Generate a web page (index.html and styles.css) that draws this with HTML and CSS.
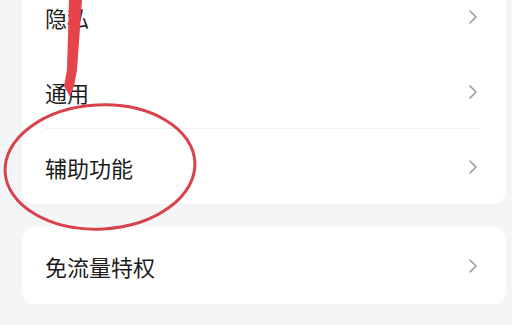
FILE: index.html
```html
<!DOCTYPE html>
<html lang="zh-CN">
<head>
<meta charset="utf-8">
<link rel="stylesheet" href="styles.css">
</head>
<body>
<div class="page">
  <div class="card card-top">
    <div class="row"><span class="label">隐私</span><svg class="chev" viewBox="0 0 10 16"><path d="M2 2 L8 8 L2 14"/></svg></div>
    <div class="row row-div"><span class="label">通用</span><svg class="chev" viewBox="0 0 10 16"><path d="M2 2 L8 8 L2 14"/></svg></div>
    <div class="row"><span class="label">辅助功能</span><svg class="chev" viewBox="0 0 10 16"><path d="M2 2 L8 8 L2 14"/></svg></div>
  </div>
  <div class="card card-second">
    <div class="row row-single"><span class="label">免流量特权</span><svg class="chev" viewBox="0 0 10 16"><path d="M2 2 L8 8 L2 14"/></svg></div>
  </div>
  <svg class="annot" viewBox="0 0 512 325" width="512" height="325">
    <polygon class="arrow" points="69,0 82,0 77,70 74,86 70,97 64,86 67,70"/>
    <ellipse class="ring" cx="100" cy="167" rx="95" ry="62" transform="rotate(-3 100 167)"/>
  </svg>
</div>
</body>
</html>
```
FILE: styles.css
```css
html, body {
  margin: 0;
  padding: 0;
  background: #f4f5f7;
}
body {
  width: 512px;
  height: 325px;
  overflow: hidden;
  font-family: "Noto Sans CJK SC", "Noto Sans", sans-serif;
}
.page {
  position: relative;
  width: 512px;
  height: 325px;
  padding: 0 6px 0 22px;
  box-sizing: border-box;
  display: flex;
  flex-direction: column;
  gap: 23px;
}
.card {
  background: #ffffff;
  border-radius: 12px;
}
.card-top {
  margin-top: -21px;
  border-radius: 0 0 12px 12px;
}
.row {
  height: 75px;
  display: flex;
  align-items: center;
  justify-content: space-between;
  padding: 0 28px 0 23px;
  position: relative;
}
.row-div::after {
  content: "";
  position: absolute;
  left: 23px;
  right: 26px;
  bottom: 0;
  height: 1px;
  background: #f0f1f3;
}
.row-single {
  height: 77px;
}
.label {
  font-size: 22px;
  color: #1c1c1c;
  line-height: 1;
}
.chev {
  width: 10px;
  height: 16px;
  fill: none;
  stroke: #9c9c9c;
  stroke-width: 1.6;
  stroke-linecap: round;
  stroke-linejoin: round;
}
.annot {
  position: absolute;
  left: 0;
  top: 0;
  pointer-events: none;
}
.arrow {
  fill: #e6434a;
}
.ring {
  fill: none;
  stroke: #d8434b;
  stroke-width: 3;
}
```
